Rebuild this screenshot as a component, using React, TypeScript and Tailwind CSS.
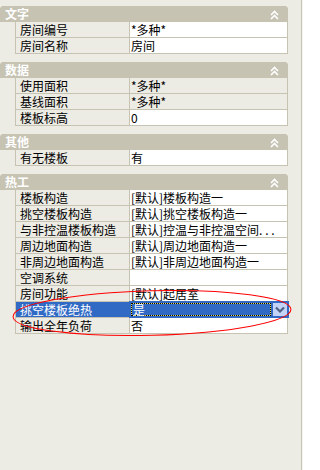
import React from "react";

const FONT = '"Noto Sans CJK SC", "Liberation Sans", sans-serif';

type RowT = { label: string; value: string; ro?: boolean; selected?: boolean };

function Header({ title }: { title: string }) {
  return (
    <div className="flex h-4 items-center justify-between bg-[#c6c3b3] pl-[5px] pr-[9px] [clip-path:polygon(2px_0,calc(100%-2px)_0,100%_2px,100%_100%,0_100%,0_2px)]">
      <span className="text-[12px] font-bold leading-4 text-white">{title}</span>
      <svg width="9" height="10" viewBox="0 0 9 10" className="mt-[1px]">
        <polyline points="1,5 4.5,1.5 8,5" fill="none" stroke="#fff" strokeWidth="1.6" />
        <polyline points="1,9 4.5,5.5 8,9" fill="none" stroke="#fff" strokeWidth="1.6" />
      </svg>
    </div>
  );
}

function Row({ r }: { r: RowT }) {
  if (r.selected) {
    return (
      <div className="flex h-4 border-b border-[#c6c3b3]">
        <div className="w-[114px] shrink-0 border-r border-[#c6c3b3] bg-[#316ac5] pl-[4px] text-[12px] leading-[15px] text-white">
          {r.label}
        </div>
        <div className="relative flex-1">
          <div className="absolute left-[-1px] right-[-2px] top-[-1px] bottom-[-1px] flex bg-[#316ac5] p-[2px]">
            <div className="flex-1 border border-dotted border-black bg-[#e8d860]">
              <div className="h-full w-full bg-[#316ac5] pl-[1px] text-[12px] leading-[11px] text-white">{r.value}</div>
            </div>
            <div className="ml-[2px] flex w-[14px] items-center justify-center bg-[#c3d3f8]">
              <svg width="10" height="7" viewBox="0 0 10 7">
                <polyline points="1,1.5 5,5.5 9,1.5" fill="none" stroke="#4d6185" strokeWidth="2.2" />
              </svg>
            </div>
          </div>
        </div>
      </div>
    );
  }
  return (
    <div className="flex h-4 border-b border-[#c6c3b3]">
      <div className="w-[114px] shrink-0 border-r border-[#c6c3b3] pl-[4px] text-[12px] leading-[15px] text-black whitespace-nowrap">
        {r.label}
      </div>
      <div
        className={
          "flex-1 overflow-hidden whitespace-nowrap pl-[1px] text-[12px] leading-[15px] text-black " +
          (r.ro ? "bg-[#ecebe4]" : "bg-white")
        }
      >
        {r.value}
      </div>
    </div>
  );
}

function Section({ title, rows }: { title: string; rows: RowT[] }) {
  return (
    <div className="mb-[8px]">
      <Header title={title} />
      <div className="ml-[15px] border-l border-r border-[#c6c3b3]">
        {rows.map((r, i) => (
          <Row key={i} r={r} />
        ))}
      </div>
    </div>
  );
}

export default function App() {
  return (
    <div className="relative flex h-[470px] w-[303px] bg-[#ecebe4]" style={{ fontFamily: FONT }}>
      <div className="w-[288px] shrink-0 pt-[6px]">
        <Section
          title="文字"
          rows={[
            { label: "房间编号", value: "*多种*" },
            { label: "房间名称", value: "房间" },
          ]}
        />
        <Section
          title="数据"
          rows={[
            { label: "使用面积", value: "*多种*", ro: true },
            { label: "基线面积", value: "*多种*", ro: true },
            { label: "楼板标高", value: "0" },
          ]}
        />
        <Section title="其他" rows={[{ label: "有无楼板", value: "有" }]} />
        <Section
          title="热工"
          rows={[
            { label: "楼板构造", value: "[默认]楼板构造一" },
            { label: "挑空楼板构造", value: "[默认]挑空楼板构造一" },
            { label: "与非控温楼板构造", value: "[默认]控温与非控温空间. . ." },
            { label: "周边地面构造", value: "[默认]周边地面构造一" },
            { label: "非周边地面构造", value: "[默认]非周边地面构造一" },
            { label: "空调系统", value: "" },
            { label: "房间功能", value: "[默认]起居室" },
            { label: "挑空楼板绝热", value: "是", selected: true },
            { label: "输出全年负荷", value: "否" },
          ]}
        />
      </div>
      <div className="flex-1" />
      <div className="w-px bg-[#c9c6b8]" />
      <div className="w-px bg-[#f4f3ee]" />
      <svg className="pointer-events-none absolute left-0 top-0" width="303" height="470">
        <ellipse
          cx="152"
          cy="313"
          rx="139"
          ry="22.3"
          fill="none"
          stroke="#ff0000"
          strokeWidth="1"
          transform="rotate(-1.5 152 313)"
        />
      </svg>
    </div>
  );
}
